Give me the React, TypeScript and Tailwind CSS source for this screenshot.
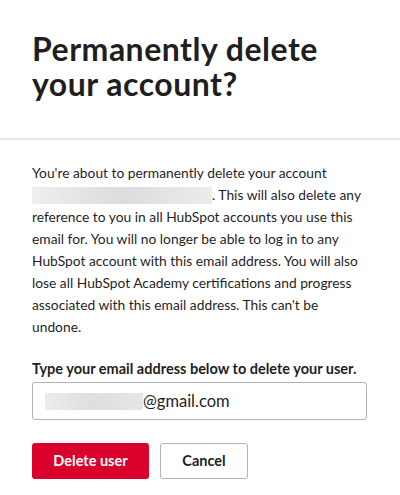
import React, { useState } from "react";

const App = (): JSX.Element => {
  const [email, setEmail] = useState("");

  return (
    <div
      className="w-[400px] h-[495px] bg-white text-[#1f1f1f] overflow-hidden"
      style={{ fontFamily: "Lato, 'Noto Sans', sans-serif" }}
    >
      <div className="px-8 pt-[31px] pb-[37px] border-b-2 border-[#e6e6e6]">
        <h1 className="text-[32px] leading-[35px] font-bold tracking-[0.5px]">
          Permanently delete your account?
        </h1>
      </div>
      <div className="px-8 pt-[22px]">
        <p className="text-[13.8px] leading-[22px]">
          You're about to permanently delete your account{" "}
          <span className="inline-block w-[180px] h-[17px] align-[-4px] bg-gradient-to-r from-[#efefef] via-[#dcdcdc] to-[#ececec] blur-[0.5px]" />
          . This will also delete any reference to you in all HubSpot accounts
          you use this email for. You will no longer be able to log in to any
          HubSpot account with this email address. You will also lose all
          HubSpot Academy certifications and progress associated with this
          email address. This can't be undone.
        </p>
        <label className="block mt-[21px] text-[14.5px] leading-[20px] font-bold">
          Type your email address below to delete your user.
        </label>
        <div className="mt-[3px] h-[38px] w-[335px] flex items-center border border-[#b3b3b3] rounded-[3px] px-3">
          <span className="w-[98px] h-[17px] bg-gradient-to-r from-[#ececec] via-[#dedede] to-[#e6e6e6] blur-[0.5px]" />
          <input
            value={email || "@gmail.com"}
            onChange={(e) => setEmail(e.target.value)}
            className="flex-1 min-w-0 outline-none text-[16.5px] bg-transparent"
          />
        </div>
        <div className="mt-[23px] flex gap-[11px]">
          <button className="w-[117px] h-[36px] rounded-[3px] bg-[#d9002b] text-white text-[14.5px] font-bold">
            Delete user
          </button>
          <button className="w-[88px] h-[36px] rounded-[3px] border border-[#b3b3b3] bg-white text-[14.5px] font-bold">
            Cancel
          </button>
        </div>
      </div>
    </div>
  );
};

export default App;
